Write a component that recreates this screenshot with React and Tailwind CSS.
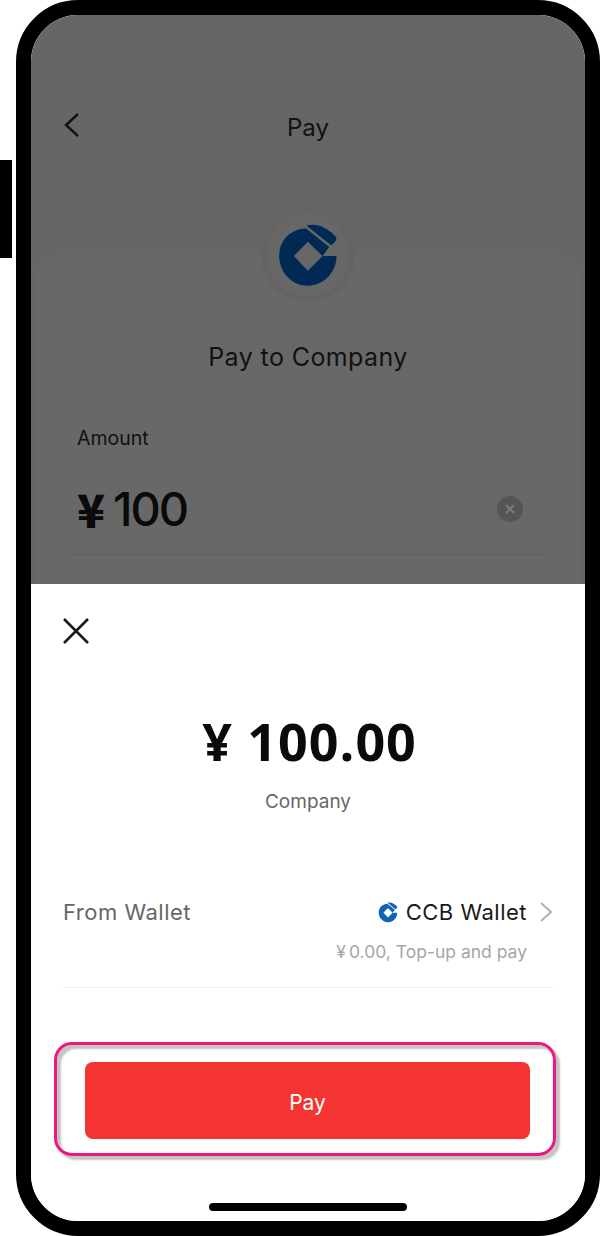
import React from 'react';

const font = { fontFamily: 'Inter, "Noto Sans", sans-serif' };

const CcbLogo = ({ className }) => (
  <svg viewBox="140 92 185 195" className={className} fill="currentColor">
    <path d="M318 191C318 240 280 280 232 280C185 280 146 240 146 190C146 160 160 135 182 122C195 113 212 109 226 108L296 164L276 191L232 148L190 191L232 235L276 191Z" />
    <path d="M228 100C242 96 265 96 280 106C295 113 310 125 317 135Q320 142 315 147L306 156Q302 160 298 156Z" />
  </svg>
);

const App = () => {
  return (
    <div className="relative w-[600px] h-[1236px] bg-white pl-4" style={font}>
      <div className="absolute left-0 top-[160px] w-3 h-[98px] bg-black" />

      <div className="w-[584px] h-[1236px] rounded-[62px] border-[15px] border-black overflow-hidden flex flex-col">
        {/* dimmed page behind the sheet */}
        <div className="h-[569px] shrink-0 bg-[#666666] flex flex-col">
          <div className="mt-[98px] h-[30px] shrink-0 px-[31px] grid grid-cols-[1fr_auto_1fr] items-center">
            <svg className="w-5 h-[28px] -mt-[7px]" viewBox="0 0 20 28" fill="none" stroke="#111" strokeWidth="2.4">
              <path d="M16 3 L4 14 L16 25" />
            </svg>
            <span className="text-[24px] leading-[30px] text-[#111]">Pay</span>
          </div>

          <div className="mt-[111px] mx-[4px] flex-1 rounded-t-[24px] bg-[#686868] flex flex-col">
            <div className="-mt-[46px] self-center w-[94px] h-[94px] rounded-full border-[6px] border-[#646464] bg-[#676767] flex items-center justify-center shrink-0">
              <CcbLogo className="w-[62px] h-[65px] text-[#002a54]" />
            </div>
            <div className="mt-[38px] text-center text-[25px] leading-[34px] tracking-[0.4px] text-[#111]">Pay to Company</div>
            <div className="mt-[51px] ml-[42px] text-[19.5px] leading-[26px] text-[#111]">Amount</div>
            <div className="mt-[32px] mx-[36px] pl-[6px] pr-[22px] h-[72px] flex items-center justify-between border-b border-[#5f5f5f] pb-[20px]">
              <div className="flex items-center text-[#0a0a0a] text-[47px] leading-[52px]">
                <span className="mr-[8px] font-black text-[46px] -mt-[2px]" style={{ fontFamily: '"Noto Sans CJK SC", sans-serif' }}>¥</span>
                <span className="font-medium tracking-[-2px]">100</span>
              </div>
              <div className="w-[26px] h-[26px] rounded-full bg-[#555555] flex items-center justify-center">
                <svg className="w-3 h-3" viewBox="0 0 12 12" stroke="#7a7a7a" strokeWidth="2" fill="none">
                  <path d="M2 2 L10 10 M10 2 L2 10" />
                </svg>
              </div>
            </div>
          </div>
        </div>

        {/* payment sheet */}
        <div className="flex-1 bg-white flex flex-col">
          <svg className="ml-[31px] mt-[33px] w-[28px] h-[28px] shrink-0" viewBox="0 0 28 28" stroke="#1a1a1a" strokeWidth="2.6" fill="none">
            <path d="M2 2 L26 26 M26 2 L2 26" />
          </svg>
          <div className="mt-[66px] pl-[3px] text-center text-[52px] leading-[60px] font-bold text-[#0a0a0a] tracking-[1px]" style={{ fontFamily: '"Open Sans", sans-serif' }}>
            ¥ 100.00
          </div>
          <div className="mt-[18px] text-center text-[19px] leading-[26px] text-[#666666]">Company</div>

          <div className="mt-[82px] mx-[32px] flex items-center justify-between text-[22px] leading-[30px] tracking-[0.5px]">
            <span className="text-[#666666]">From Wallet</span>
            <div className="flex items-center">
              <CcbLogo className="w-[20px] h-[21px] text-[#0f63b0] mr-[8px]" />
              <span className="text-[#1a1a1a]">CCB Wallet</span>
              <svg className="ml-[14px] w-[12px] h-[20px] -mt-[1px] -translate-x-[1px]" viewBox="0 0 12 20" fill="none" stroke="#b0b0b0" strokeWidth="2">
                <path d="M1 1 L11 10 L1 19" />
              </svg>
            </div>
          </div>
          <div className="mt-[13px] mr-[58px] text-right text-[17.5px] leading-[24px] text-[#a6a6a6]">¥&#8201;0.00, Top-up and pay</div>
          <div className="mt-[23px] mx-[32px] h-px bg-[#eeeeee]" />

          <div className="relative mt-[74px] ml-[54px] w-[445px]">
            <button className="w-full h-[77px] pt-[4px] rounded-[8px] bg-[#f43333] text-white text-[21px]">Pay</button>
            <div className="absolute -left-[31px] -right-[26px] -top-[20px] -bottom-[17px] rounded-[18px] border-[3px] border-[#f0157f] shadow-[4px_4px_2px_#c4c4c4,inset_4px_4px_2px_#c4c4c4]" />
          </div>

          <div className="mt-[64px] self-center w-[198px] h-2 rounded-full bg-black" />
        </div>
      </div>
    </div>
  );
};

export default App;
